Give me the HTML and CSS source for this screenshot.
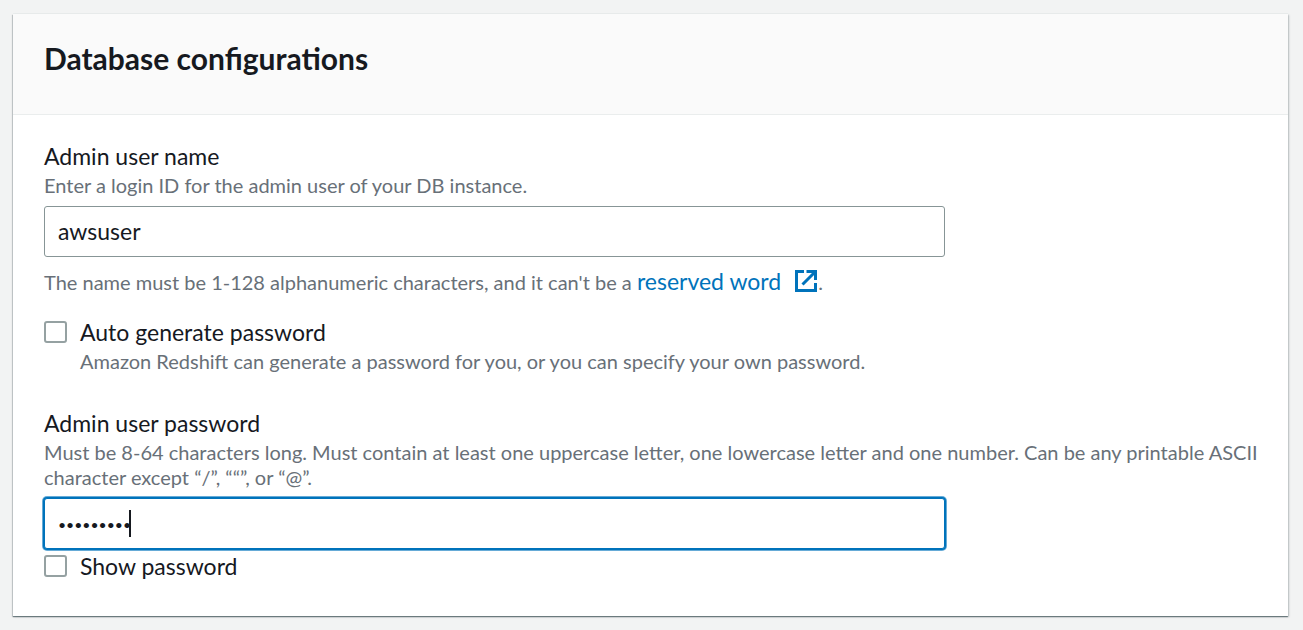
FILE: index.html
```html
<!DOCTYPE html>
<html lang="en">
<head>
<meta charset="utf-8">
<title>Database configurations</title>
<link rel="stylesheet" href="styles.css">
</head>
<body>
<main class="panel">
  <header class="panel-header">
    <h2 class="panel-title">Database configurations</h2>
  </header>
  <form class="panel-body">
    <div class="field">
      <label class="label" for="username">Admin user name</label>
      <p class="hint" id="username-hint">Enter a login ID for the admin user of your DB instance.</p>
      <input class="input" id="username" type="text" value="awsuser" aria-describedby="username-hint">
      <p class="hint constraint">The name must be 1-128 alphanumeric characters, and it can't be a <a class="link" href="#reserved">reserved word<svg class="external" viewBox="0 0 24 24" aria-hidden="true"><path d="M10 2.500H2.500v19h19V14M12.500 2.500h9V11M21.500 2.500 8.500 15.500"/></svg></a>.</p>
    </div>
    <div class="check">
      <input class="checkbox" id="auto" type="checkbox" aria-describedby="auto-hint">
      <div>
        <label class="label" for="auto">Auto generate password</label>
        <p class="hint" id="auto-hint">Amazon Redshift can generate a password for you, or you can specify your own password.</p>
      </div>
    </div>
    <div class="field password-field">
      <label class="label" for="password">Admin user password</label>
      <p class="hint" id="password-hint">Must be 8-64 characters long. Must contain at least one uppercase letter, one lowercase letter and one number. Can be any printable ASCII character except “/”, ““”, or “@”.</p>
      <div class="input-wrap">
        <input class="input active" id="password" type="password" value="Passw0rd1" aria-describedby="password-hint">
        <span class="caret"></span>
      </div>
    </div>
    <div class="check">
      <input class="checkbox" id="show" type="checkbox">
      <label class="label" for="show">Show password</label>
    </div>
  </form>
</main>
</body>
</html>
```
FILE: styles.css
```css
* { box-sizing: border-box; }
body {
  margin: 0;
  padding: 14px 15px 14px 13px;
  background: #f2f3f3;
  color: #16191f;
  font-family: Lato, "Noto Sans", sans-serif;
}
.panel {
  background: #fff;
  box-shadow: 0 1px 1px 0 rgba(0, 28, 36, .4), 1px 1px 2px 0 rgba(0, 28, 36, .2), -1px 1px 1px 0 rgba(0, 28, 36, .15), 0 -1px 0 0 #eaeded;
}
.panel-header {
  padding: 26px 31px 38px;
  background: #fafafa;
  border-bottom: 1px solid #eaeded;
}
.panel-title { margin: 0; font-size: 30px; line-height: 36px; font-weight: 700; }
.panel-body { padding: 27px 20px 33px 31px; }
.label { display: block; margin-bottom: 2px; font-size: 23px; line-height: 29px; }
.hint { margin: 0; color: #687078; font-size: 20px; line-height: 25px; }
.input {
  display: block;
  width: calc(100% - 323px);
  height: 51px;
  margin-top: 8px;
  padding: 0 13px 2px;
  background: #fff;
  border: 1px solid #879596;
  border-radius: 3px;
  color: #16191f;
  font: 23px Lato, "Noto Sans", sans-serif;
}
.constraint { margin-top: 8px; line-height: 32px; }
.link { color: #0073bb; font-size: 23px; text-decoration: none; }
.external {
  width: 24px;
  height: 24px;
  margin-left: 13px;
  vertical-align: -3px;
  fill: none;
  stroke: currentColor;
  stroke-width: 3;
}
.check { display: flex; gap: 13px; }
.field + .check { margin-top: 20px; }
.checkbox {
  appearance: none;
  flex: none;
  width: 23px;
  height: 22px;
  margin: 3px 0 0;
  background: #fff;
  border: 2px solid #95a1a2;
  border-radius: 3px;
}
.password-field { margin-top: 35px; }
.password-field + .check { margin-top: 3px; }
.input-wrap { position: relative; }
.active {
  padding: 2px 13px 0;
  border-color: #0073bb;
  box-shadow: 0 0 0 1px #0073bb, 0 0 0 2px #66abd7;
  outline: none;
  font-size: 14px;
}
.caret {
  position: absolute;
  left: 85px;
  top: 12px;
  width: 2px;
  height: 27px;
  background: #16191f;
}
```
